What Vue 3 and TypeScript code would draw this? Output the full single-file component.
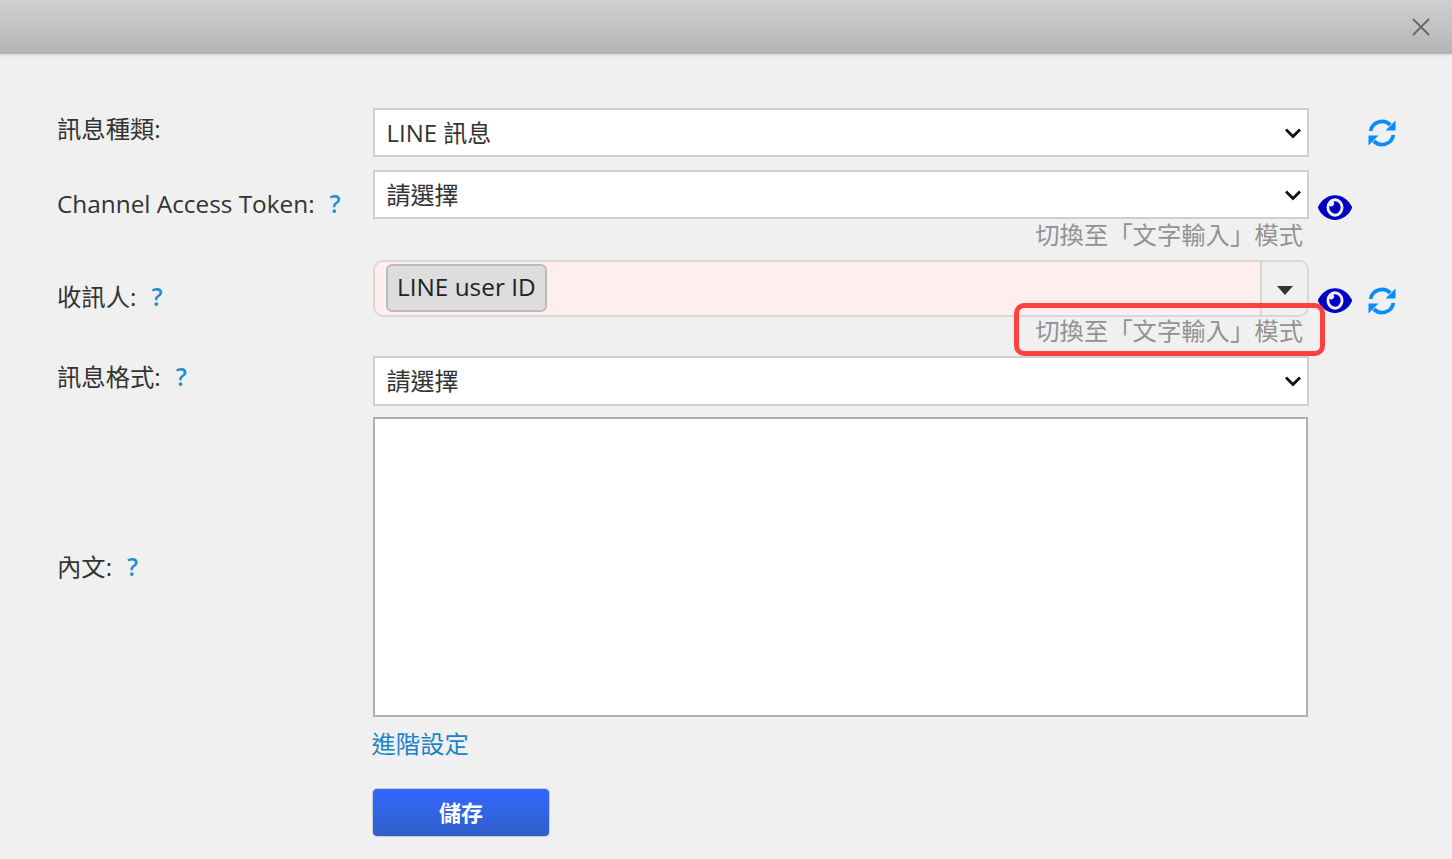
<script setup lang="ts">
const hint = '切換至「文字輸入」模式'
const eyePath = 'M572.52 241.4C518.29 135.59 410.93 64 288 64S57.68 135.64 3.48 241.41a32.35 32.35 0 0 0 0 29.19C57.71 376.41 165.07 448 288 448s230.32-71.64 284.52-177.41a32.35 32.35 0 0 0 0-29.19zM288 400a144 144 0 1 1 144-144 143.93 143.93 0 0 1-144 144zm0-240a95.31 95.31 0 0 0-25.31 3.79 47.85 47.85 0 0 1-66.9 66.9A95.78 95.78 0 1 0 288 160z'
</script>

<template>
  <div class="dialog">
    <header class="head">
      <svg class="close" viewBox="0 0 18 18" width="18" height="18" aria-label="關閉">
        <path d="M1 1 17 17M17 1 1 17" stroke="#666" stroke-width="1.8" fill="none" />
      </svg>
    </header>

    <form class="form" @submit.prevent>
      <div class="row r1">
        <div class="label">訊息種類:</div>
        <div class="control">
          <div class="select"><span>LINE 訊息</span>
            <svg class="chev" viewBox="0 0 18 12" width="18" height="12"><path d="M2 2.5 9 9.5 16 2.5" stroke="#111" stroke-width="2.8" fill="none" /></svg>
          </div>
        </div>
        <div class="side">
          <span class="slot"></span>
          <svg class="sync" viewBox="0 0 28 28">
            <g>
              <path d="M2.6 12A11.6 11.6 0 0 1 22.2 5.8" fill="none" stroke="#0a8cff" stroke-width="3.8" />
              <path d="M27.5 1.5V11.5H17.5Z" fill="#0a8cff" />
            </g>
            <g transform="rotate(180 14 14)">
              <path d="M2.6 12A11.6 11.6 0 0 1 22.2 5.8" fill="none" stroke="#0a8cff" stroke-width="3.8" />
              <path d="M27.5 1.5V11.5H17.5Z" fill="#0a8cff" />
            </g>
          </svg>
        </div>
      </div>

      <div class="row r2">
        <div class="label">Channel Access Token:<span class="q">?</span></div>
        <div class="control">
          <div class="select"><span>請選擇</span>
            <svg class="chev" viewBox="0 0 18 12" width="18" height="12"><path d="M2 2.5 9 9.5 16 2.5" stroke="#111" stroke-width="2.8" fill="none" /></svg>
          </div>
          <div class="hint">{{ hint }}</div>
        </div>
        <div class="side">
          <svg class="eye" viewBox="0 0 576 512" preserveAspectRatio="none"><path :d="eyePath" /></svg>
        </div>
      </div>

      <div class="row r3">
        <div class="label">收訊人:<span class="q">?</span></div>
        <div class="control">
          <div class="multi">
            <div class="tags"><span class="tag">LINE user ID</span></div>
            <div class="caret-box"><span class="caret"></span></div>
          </div>
          <div class="hint hint-tight">{{ hint }}</div>
        </div>
        <div class="side">
          <svg class="eye" viewBox="0 0 576 512" preserveAspectRatio="none"><path :d="eyePath" /></svg>
          <svg class="sync" viewBox="0 0 28 28">
            <g>
              <path d="M2.6 12A11.6 11.6 0 0 1 22.2 5.8" fill="none" stroke="#0a8cff" stroke-width="3.8" />
              <path d="M27.5 1.5V11.5H17.5Z" fill="#0a8cff" />
            </g>
            <g transform="rotate(180 14 14)">
              <path d="M2.6 12A11.6 11.6 0 0 1 22.2 5.8" fill="none" stroke="#0a8cff" stroke-width="3.8" />
              <path d="M27.5 1.5V11.5H17.5Z" fill="#0a8cff" />
            </g>
          </svg>
        </div>
      </div>

      <div class="row r4">
        <div class="label">訊息格式:<span class="q">?</span></div>
        <div class="control">
          <div class="select tall"><span>請選擇</span>
            <svg class="chev" viewBox="0 0 18 12" width="18" height="12"><path d="M2 2.5 9 9.5 16 2.5" stroke="#111" stroke-width="2.8" fill="none" /></svg>
          </div>
        </div>
      </div>

      <div class="row r5">
        <div class="label plain">內文:<span class="q">?</span></div>
        <div class="control">
          <div class="textarea"></div>
        </div>
      </div>

      <div class="row r6">
        <div></div>
        <div class="control"><a class="link">進階設定</a></div>
      </div>

      <div class="row r7">
        <div></div>
        <div class="control"><button class="save" type="button">儲存</button></div>
      </div>
    </form>

    <div class="highlight"></div>
  </div>
</template>

<style>
html, body { margin: 0; height: 859px; overflow: hidden; background: #f0f0f0; }
</style>

<style scoped>
.dialog {
  position: relative;
  height: 859px;
  background: #f0f0f0;
  color: #333;
  font-family: "Open Sans", "Noto Sans CJK TC", sans-serif;
  font-size: 24.35px;
  overflow: hidden;
}
.head {
  height: 54px;
  display: flex;
  align-items: center;
  justify-content: flex-end;
  padding-right: 22px;
  box-sizing: border-box;
  background: linear-gradient(#d0d0d0, #b4b4b4);
  box-shadow: 0 1px 3px rgba(0, 0, 0, 0.12);
}
.close { display: block; }
.form { padding: 54px 0 0 57px; }
.row {
  display: grid;
  grid-template-columns: 315.5px 936.5px auto;
  align-items: start;
}
.r1 { margin-bottom: 13px; }
.r2 { margin-bottom: 10px; }
.r3 { margin-bottom: 10px; }
.r4 { margin-bottom: 11px; }
.r5 { margin-bottom: 11px; }
.r6 { margin-bottom: 28px; }
.label {
  align-self: center;
  padding-bottom: 8px;
  line-height: 33px;
  white-space: nowrap;
}
.r2 .label, .r3 .label { padding-bottom: 14px; }
.r4 .label { padding-bottom: 10px; }
.label.plain { padding-bottom: 2px; }
.q {
  margin-left: 15px;
  color: #1a8fd6;
  font-weight: 600;
}
.select {
  height: 49px;
  box-sizing: border-box;
  border: 2px solid #cfcfcf;
  background: #fff;
  display: flex;
  align-items: center;
  justify-content: space-between;
  padding: 0 5px 0 12px;
  line-height: 1;
}
.select.tall { height: 50px; }
.select span { font-size: 24px; }
.chev { display: block; }
.hint {
  margin-top: 1px;
  height: 30px;
  line-height: 30px;
  text-align: right;
  padding-right: 6px;
  color: #929292;
  white-space: nowrap;
}
.hint-tight { margin-top: -1px; }
.multi {
  height: 57px;
  box-sizing: border-box;
  border: 2px solid #d8d8d8;
  border-radius: 10px;
  background: #ffeeee;
  display: flex;
  overflow: hidden;
}
.tags {
  flex: 1;
  padding: 2px 0 0 11.5px;
}
.tag {
  display: inline-block;
  box-sizing: border-box;
  height: 48px;
  line-height: 41px;
  padding: 0 9px;
  background: #dddddd;
  border: 2px solid #bbbbbb;
  border-radius: 6px;
  color: #222;
}
.caret-box {
  width: 45px;
  background: #f0f0f0;
  border-left: 2px solid #d6d6d6;
  display: flex;
  align-items: center;
  justify-content: center;
}
.caret {
  margin-top: 3px;
  width: 0;
  height: 0;
  border-left: 8px solid transparent;
  border-right: 8px solid transparent;
  border-top: 9px solid #333;
}
.side {
  display: flex;
  align-items: center;
  gap: 16px;
  padding-left: 9px;
}
.r1 .side { padding-top: 11px; }
.r2 .side { padding-top: 21px; }
.r3 .side { padding-top: 24px; }
.slot { width: 34px; }
.eye { width: 34px; height: 33px; display: block; fill: #0000c4; }
.sync { width: 28px; height: 28px; display: block; }
.textarea {
  width: 935px;
  height: 300px;
  box-sizing: border-box;
  border: 2px solid #b0b0b0;
  background: #fff;
}
.link {
  display: block;
  height: 32px;
  line-height: 32px;
  margin-left: -1px;
  color: #1a84c8;
}
.save {
  display: block;
  width: 178px;
  height: 49px;
  margin-left: -0.5px;
  padding: 0 0 4px;
  border: 1px solid #c4ccdc;
  border-radius: 5px;
  background: linear-gradient(#3366ff, #3060c8);
  color: #fff;
  font: 700 22px "Open Sans", "Noto Sans CJK TC", sans-serif;
}
.highlight {
  position: absolute;
  left: 1014px;
  top: 303px;
  width: 311px;
  height: 53px;
  box-sizing: border-box;
  border: 5px solid #ff4040;
  border-radius: 10px;
}
</style>
